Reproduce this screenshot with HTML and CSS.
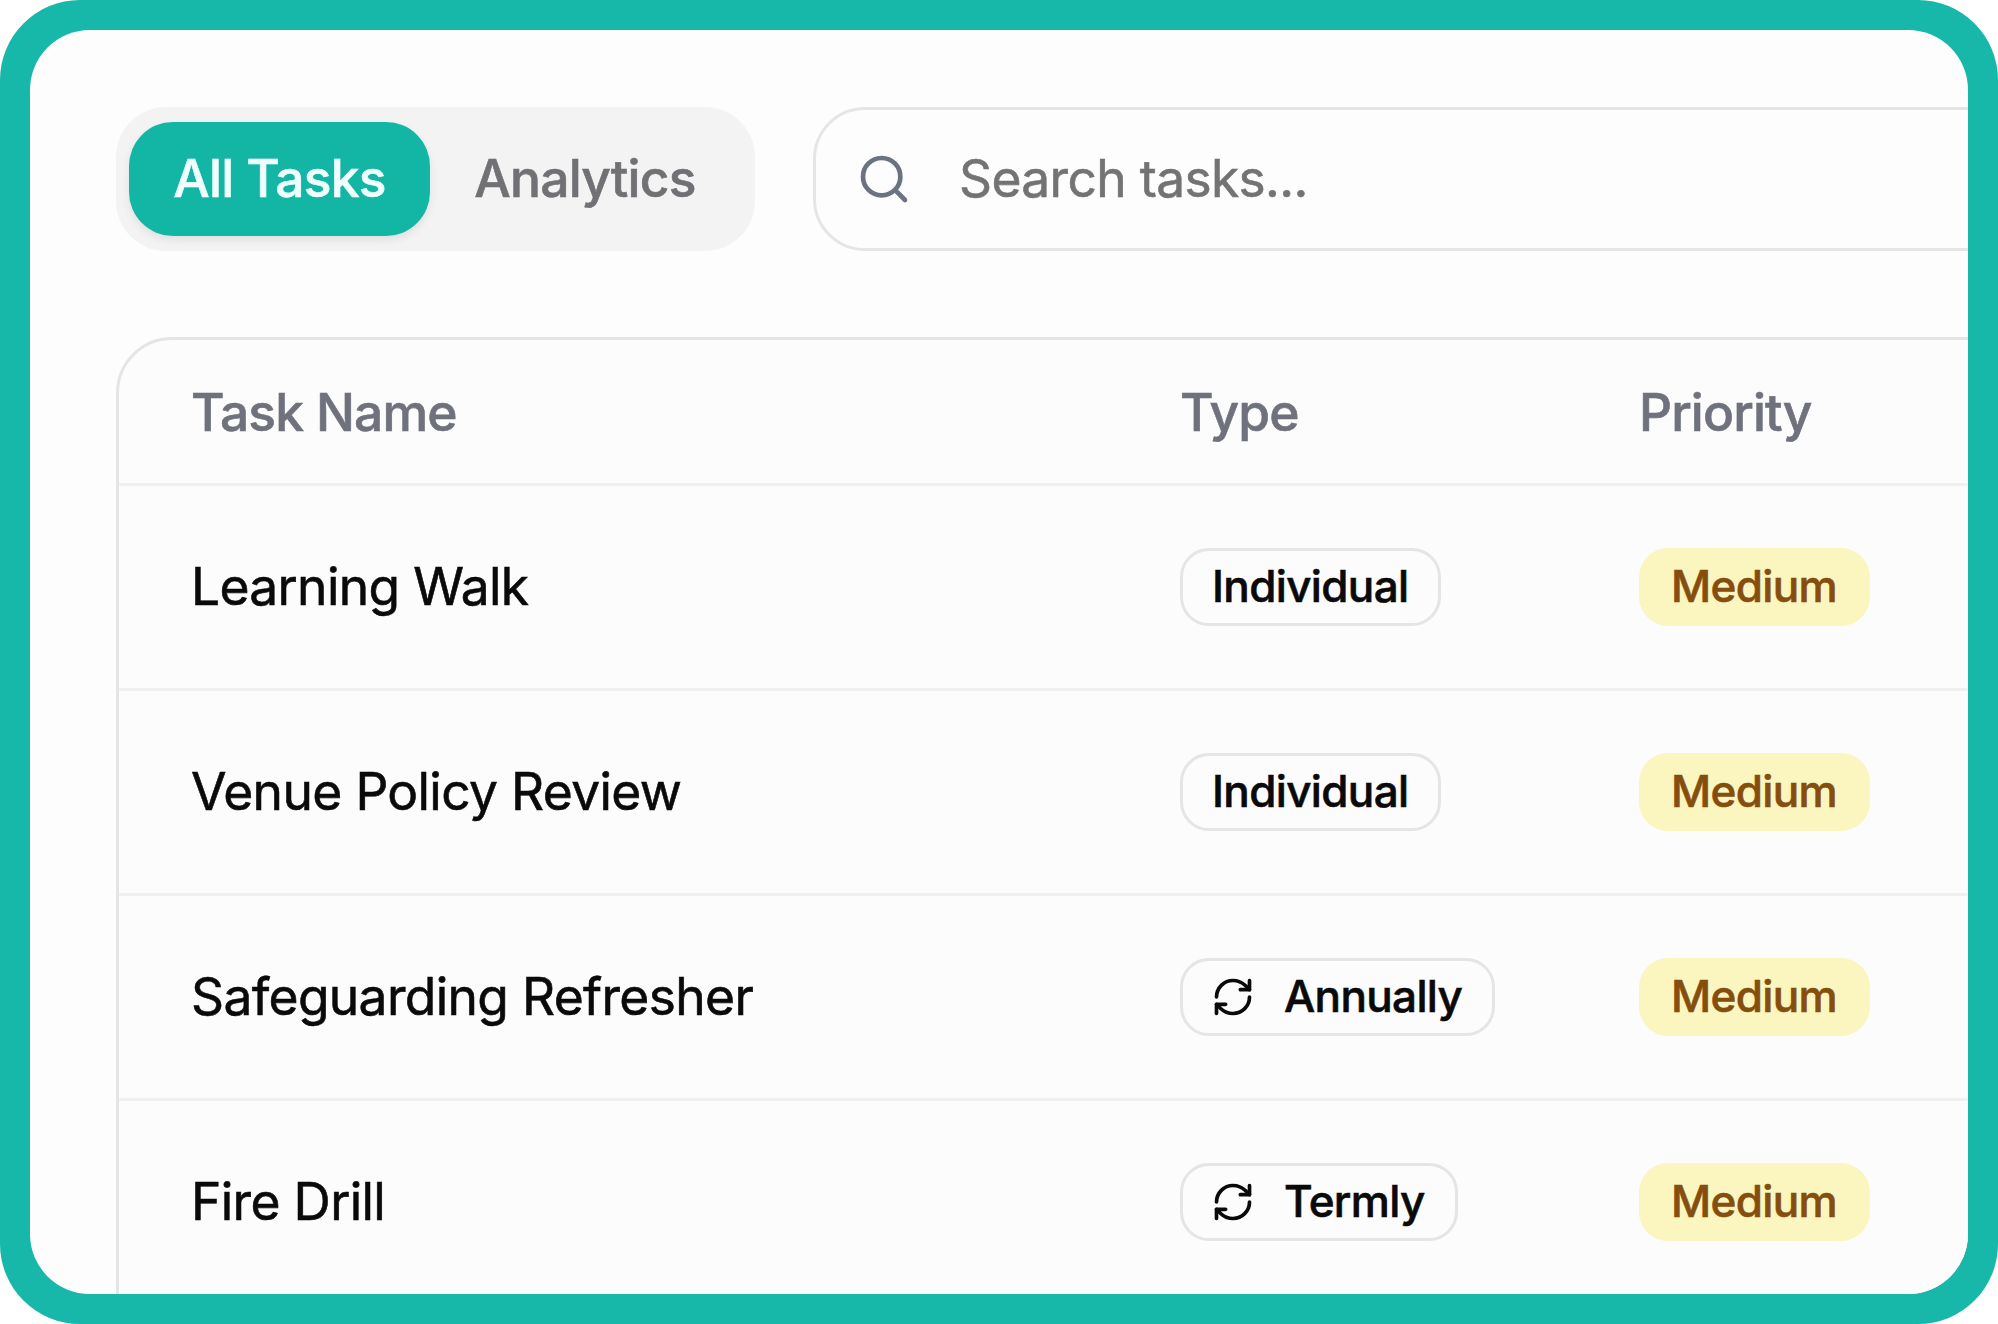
FILE: index.html
```html
<!DOCTYPE html>
<html lang="en">
<head>
<meta charset="utf-8">
<title>Tasks</title>
<link rel="stylesheet" href="styles.css">
</head>
<body>
<svg class="sprite" aria-hidden="true">
  <symbol id="refresh" viewBox="0 0 24 24">
    <path d="M3 12a9 9 0 0 1 9-9 9.75 9.75 0 0 1 6.74 2.74L21 8"/>
    <path d="M21 3v5h-5"/>
    <path d="M21 12a9 9 0 0 1-9 9 9.75 9.75 0 0 1-6.74-2.74L3 16"/>
    <path d="M8 16H3v5"/>
  </symbol>
</svg>
<div class="frame">
  <main class="screen">
    <div class="toolbar">
      <nav class="tabs">
        <span class="tab tab-active"><span class="tab-label">All Tasks</span></span>
        <span class="tab tab-idle"><span class="tab-label">Analytics</span></span>
      </nav>
      <div class="search">
        <svg class="search-icon" viewBox="0 0 24 24"><circle cx="11" cy="11" r="8"/><path d="m21 21-4.3-4.3"/></svg>
        <span class="search-text">Search tasks...</span>
      </div>
    </div>
    <section class="table">
      <div class="row head"><span class="h-name">Task Name</span><span class="h-type">Type</span><span class="h-priority">Priority</span></div>
      <div class="row"><span class="name">Learning Walk</span><span class="cell"><span class="badge">Individual</span></span><span class="cell"><span class="badge medium">Medium</span></span></div>
      <div class="row"><span class="name">Venue Policy Review</span><span class="cell"><span class="badge">Individual</span></span><span class="cell"><span class="badge medium">Medium</span></span></div>
      <div class="row"><span class="name">Safeguarding Refresher</span><span class="cell"><span class="badge"><svg class="badge-icon"><use href="#refresh"/></svg>Annually</span></span><span class="cell"><span class="badge medium">Medium</span></span></div>
      <div class="row"><span class="name">Fire Drill</span><span class="cell"><span class="badge"><svg class="badge-icon"><use href="#refresh"/></svg>Termly</span></span><span class="cell"><span class="badge medium">Medium</span></span></div>
    </section>
  </main>
</div>
</body>
</html>
```
FILE: styles.css
```css
* { box-sizing: border-box; }
body {
  margin: 0;
  background: #fff;
  font-family: Inter, "Liberation Sans", sans-serif;
  font-size: 51.5px;
  font-weight: 400;
  line-height: 72px;
  letter-spacing: -0.0128em;
  -webkit-text-stroke: 0.6px currentColor;
  color: #0a0a0a;
  overflow: hidden;
}
.sprite { display: none; }
.frame {
  width: 1998px;
  height: 1324px;
  padding: 30px;
  border-radius: 80px;
  background: #17b8a9;
}
.screen {
  height: 1264px;
  padding: 77px 0 0 86px;
  border-radius: 60px;
  background: #fdfdfd;
  overflow: hidden;
}
.toolbar { display: flex; gap: 58px; height: 144px; }
.tabs {
  display: flex;
  flex: none;
  width: 639px;
  padding: 15px 13px;
  border-radius: 50px;
  background: #f3f3f3;
  font-weight: 500;
  letter-spacing: -0.015em;
}
.tab { display: flex; align-items: center; justify-content: center; border-radius: 44px; }
.tab-active {
  width: 301px;
  background: #13b5a5;
  color: #f0fffd;
  box-shadow: 0 4px 8px rgba(0, 0, 0, .08);
}
.tab-idle { width: 310px; color: #717175; }
.tab-label, .search-text, .name { padding-bottom: 2px; }
.search {
  display: flex;
  flex: none;
  align-items: center;
  width: 1300px;
  padding-left: 40px;
  border: 3.5px solid #e5e5e5;
  border-radius: 52px;
  color: #737373;
}
.search-icon { width: 56px; height: 56px; margin-right: 47px; }
svg { fill: none; stroke: currentColor; stroke-width: 2; stroke-linecap: round; stroke-linejoin: round; }
.search-icon { color: #6b7280; }
.table {
  width: 2100px;
  height: 1100px;
  margin-top: 86px;
  border: 3.5px solid #e5e5e5;
  border-radius: 56px;
  background: #fcfcfc;
}
.row {
  display: grid;
  grid-template-columns: 989px 459px 1fr;
  align-items: center;
  height: 204.9px;
  padding-left: 72px;
  border-bottom: 3.5px solid #f0f0f0;
}
.head { height: 146px; font-weight: 500; letter-spacing: -0.017em; color: #6f727c; }
.cell { display: flex; }
.badge {
  display: flex;
  align-items: center;
  height: 78px;
  margin-top: 1px;
  padding: 0 30px 3px 29px;
  border: 3px solid #e5e5e5;
  border-radius: 29px;
  font-size: 44px;
  line-height: 60px;
  font-weight: 500;
  letter-spacing: -0.0145em;
}
.medium { border-color: transparent; background: #fbf5bf; background-clip: border-box; color: #854d0e; }
.badge-icon { width: 44px; height: 44px; margin: 3px 29px 0 -1px; }
```
